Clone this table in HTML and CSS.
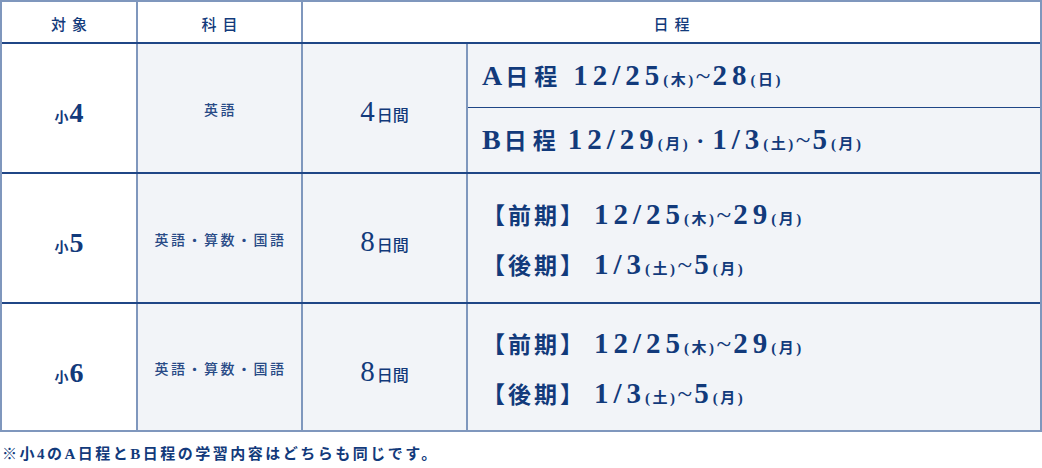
FILE: index.html
```html
<!DOCTYPE html>
<html lang="ja">
<head>
<meta charset="utf-8">
<title>日程表</title>
<link rel="stylesheet" href="styles.css">
</head>
<body>
<div class="table">
  <div class="row head">
    <div class="cell c1">対象</div>
    <div class="cell c2">科目</div>
    <div class="cell c34">日程</div>
  </div>
  <div class="row r1">
    <div class="cell c1 grade"><span class="sm">小</span><span class="big">4</span></div>
    <div class="cell c2 subj">英語</div>
    <div class="cell c3 days"><span class="dnum">4</span><span class="dk">日間</span></div>
    <div class="cell c4 split">
      <div class="sub">
        <p class="sched"><span class="L">A</span><span class="k ka">日程</span><span class="n">12/25</span><span class="w">(木)</span><span class="t">~</span><span class="n">28</span><span class="w">(日)</span></p>
      </div>
      <div class="sub">
        <p class="sched"><span class="L">B</span><span class="k kb">日程</span><span class="n">12/29</span><span class="w">(月)</span><span class="dot">·</span><span class="n">1/3</span><span class="w">(土)</span><span class="t">~</span><span class="n">5</span><span class="w">(月)</span></p>
      </div>
    </div>
  </div>
  <div class="row r2">
    <div class="cell c1 grade"><span class="sm">小</span><span class="big">5</span></div>
    <div class="cell c2 subj">英語・算数・国語</div>
    <div class="cell c3 days"><span class="dnum">8</span><span class="dk">日間</span></div>
    <div class="cell c4 stack">
      <p class="sched"><span class="k br">【前期】</span><span class="n">12/25</span><span class="w">(木)</span><span class="t">~</span><span class="n">29</span><span class="w">(月)</span></p>
      <p class="sched"><span class="k br">【後期】</span><span class="n">1/3</span><span class="w">(土)</span><span class="t">~</span><span class="n">5</span><span class="w">(月)</span></p>
    </div>
  </div>
  <div class="row r3">
    <div class="cell c1 grade"><span class="sm">小</span><span class="big">6</span></div>
    <div class="cell c2 subj">英語・算数・国語</div>
    <div class="cell c3 days"><span class="dnum">8</span><span class="dk">日間</span></div>
    <div class="cell c4 stack">
      <p class="sched"><span class="k br">【前期】</span><span class="n">12/25</span><span class="w">(木)</span><span class="t">~</span><span class="n">29</span><span class="w">(月)</span></p>
      <p class="sched"><span class="k br">【後期】</span><span class="n">1/3</span><span class="w">(土)</span><span class="t">~</span><span class="n">5</span><span class="w">(月)</span></p>
    </div>
  </div>
</div>
<p class="note">※小4のA日程とB日程の学習内容はどちらも同じです。</p>
</body>
</html>
```
FILE: styles.css
```css
* { box-sizing: border-box; }
html, body { margin: 0; padding: 0; background: #ffffff; }
body {
  width: 1042px;
  font-family: "Liberation Serif", "Noto Sans CJK JP", serif;
  color: #123a7b;
}
.table {
  width: 1042px;
  border: 2px solid #7f97bd;
}
.row {
  display: flex;
  border-bottom: 2px solid #1f4686;
}
.row.r3 { border-bottom: none; }
.head { height: 42px; }
.r1 { height: 130px; }
.r2 { height: 130px; }
.r3 { height: 126px; }
.cell {
  display: flex;
  align-items: center;
  justify-content: center;
  border-right: 2px solid #7f97bd;
  background: #f2f4f8;
}
.c1 { width: 136px; background: #ffffff; }
.c2 { width: 165px; }
.c3 { width: 165px; }
.c4 { width: 572px; border-right: none; }
.c34 { width: 737px; border-right: none; }
.head .cell {
  background: #ffffff;
  font-family: "Noto Sans CJK JP", sans-serif;
  font-weight: 500;
  font-size: 15px;
  letter-spacing: 6px;
  padding-left: 6px;
  padding-top: 2px;
}
.grade { align-items: baseline; padding-top: 53px; }
.grade .sm {
  font-family: "Noto Sans CJK JP", sans-serif;
  font-weight: 700;
  font-size: 14px;
  margin-right: 1px;
}
.grade .big { font-weight: 700; font-size: 28px; }
.subj {
  font-family: "Noto Sans CJK JP", sans-serif;
  font-weight: 500;
  font-size: 14px;
  letter-spacing: 2.5px;
  color: #284a86;
  padding-left: 2px;
  padding-top: 2px;
}
.days { align-items: baseline; padding-top: 51px; }
.days .dnum { font-size: 29px; }
.days .dk {
  font-family: "Noto Sans CJK JP", sans-serif;
  font-size: 16px;
  font-weight: 500;
  margin-left: 2px;
}
.split {
  flex-direction: column;
  align-items: stretch;
  justify-content: flex-start;
}
.sub {
  display: flex;
  align-items: center;
  padding-left: 14px;
}
.sub:first-child { height: 64px; border-bottom: 1px solid #1f4686; }
.sub:last-child { flex: 1; }
.stack {
  flex-direction: column;
  align-items: flex-start;
  justify-content: center;
  padding-left: 14px;
  padding-top: 4px;
}
.sched {
  margin: 0;
  font-weight: 700;
  font-size: 28px;
  line-height: 50px;
  white-space: nowrap;
}
.sched span { line-height: 20px; }
.sched .L { font-size: 28px; letter-spacing: 3px; }
.sched .k {
  font-family: "Noto Sans CJK JP", sans-serif;
  font-size: 23px;
  letter-spacing: 6px;
}
.sched .ka { margin-right: 10px; }
.sched .kb { margin-right: 6px; }
.sched .k.br { letter-spacing: 3px; margin-right: 8px; }
.sched .n { font-size: 29px; letter-spacing: 5px; }
.sched .t { font-size: 27px; font-weight: 400; margin: 0 2px 0 0; }
.sched .dot { font-size: 24px; margin: 0 8px 0 6px; }
.sched .w {
  font-size: 15px;
  letter-spacing: 2.5px;
  margin-left: -1px;
  margin-right: 0;
}
.note {
  margin: 10px 0 0 2px;
  font-family: "Liberation Serif", "Noto Sans CJK JP", serif;
  font-weight: 700;
  font-size: 15px;
  letter-spacing: 2.5px;
  color: #123a7b;
}
```
